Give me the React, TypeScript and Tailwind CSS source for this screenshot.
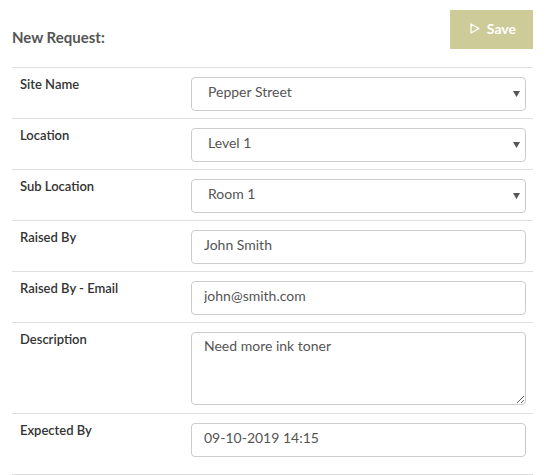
import React from "react";

// Row wrapper: label on the left, control on the right
const Row: React.FC<{
  label: string;
  last?: boolean;
  children: React.ReactNode;
}> = ({ label, last = false, children }) => {
  return (
    <div className={`flex border-t border-[#dddddd] pt-[9px] ${last ? "pb-[17px]" : "pb-[7px]"}`}>
      <div className="w-[179px] shrink-0 pl-[8px] text-[13px] font-semibold leading-[14px] text-[#333333]">
        {label}
      </div>
      <div className="mr-[7px] flex-1">{children}</div>
    </div>
  );
};

// Select with small filled caret
const SelectField: React.FC<{ value: string }> = ({ value }) => {
  return (
    <div className="relative">
      <select
        defaultValue={value}
        className="h-[34px] w-full appearance-none rounded-[4px] border border-[#cccccc] bg-white pb-[5px] pl-[16px] pr-8 text-[14px] text-[#555555] outline-none"
      >
        <option>{value}</option>
      </select>
      <svg
        className="pointer-events-none absolute right-[6px] top-1/2 h-[6px] w-[7px] -translate-y-1/2"
        viewBox="0 0 7 6"
      >
        <path d="M0 0h7L3.5 6z" fill="#555555" />
      </svg>
    </div>
  );
};

const TextField: React.FC<{ value: string }> = ({ value }) => {
  return (
    <input
      type="text"
      defaultValue={value}
      className="h-[34px] w-full rounded-[4px] border border-[#cccccc] bg-white px-[12px] pb-[5px] text-[14px] text-[#555555] outline-none"
    />
  );
};

export default function App() {
  return (
    <div
      className="min-h-[475px] bg-white pl-[12px] pr-[15px]"
      style={{ fontFamily: "Lato, 'Open Sans', Arial, sans-serif" }}
    >
      {/* Header */}
      <div className="flex h-[67px] items-start justify-between">
        <h1 className="mt-[27px] text-[15px] font-bold leading-[20px] text-[#555555]">New Request:</h1>
        <button
          type="button"
          className="mt-[10px] flex h-[39px] items-center gap-[7px] bg-[#cdcb97] pb-[2px] pl-[20px] pr-[17px] text-[14px] font-bold text-white"
        >
          <svg className="h-[11px] w-[10px]" viewBox="0 0 10 11" fill="none">
            <path d="M1 1L9 5.5L1 10Z" stroke="white" strokeWidth={1.3} strokeLinejoin="round" />
          </svg>
          Save
        </button>
      </div>

      {/* Form */}
      <div className="border-b border-[#dddddd]">
        <Row label="Site Name">
          <SelectField value="Pepper Street" />
        </Row>
        <Row label="Location">
          <SelectField value="Level 1" />
        </Row>
        <Row label="Sub Location">
          <SelectField value="Room 1" />
        </Row>
        <Row label="Raised By">
          <TextField value="John Smith" />
        </Row>
        <Row label="Raised By - Email">
          <TextField value="john@smith.com" />
        </Row>
        <div className="flex border-t border-[#dddddd] pb-[8px] pt-[9px]">
          <div className="w-[179px] shrink-0 pl-[8px] text-[13px] font-semibold leading-[14px] text-[#333333]">
            Description
          </div>
          <div className="mr-[7px] flex-1">
            <textarea
              defaultValue="Need more ink toner"
              className="block h-[73px] w-full rounded-[4px] border border-[#cccccc] bg-white px-[12px] pb-[6px] pt-[3px] text-[14px] leading-[20px] text-[#555555] outline-none"
            />
          </div>
        </div>
        <Row label="Expected By" last>
          <TextField value="09-10-2019 14:15" />
        </Row>
      </div>
    </div>
  );
}
